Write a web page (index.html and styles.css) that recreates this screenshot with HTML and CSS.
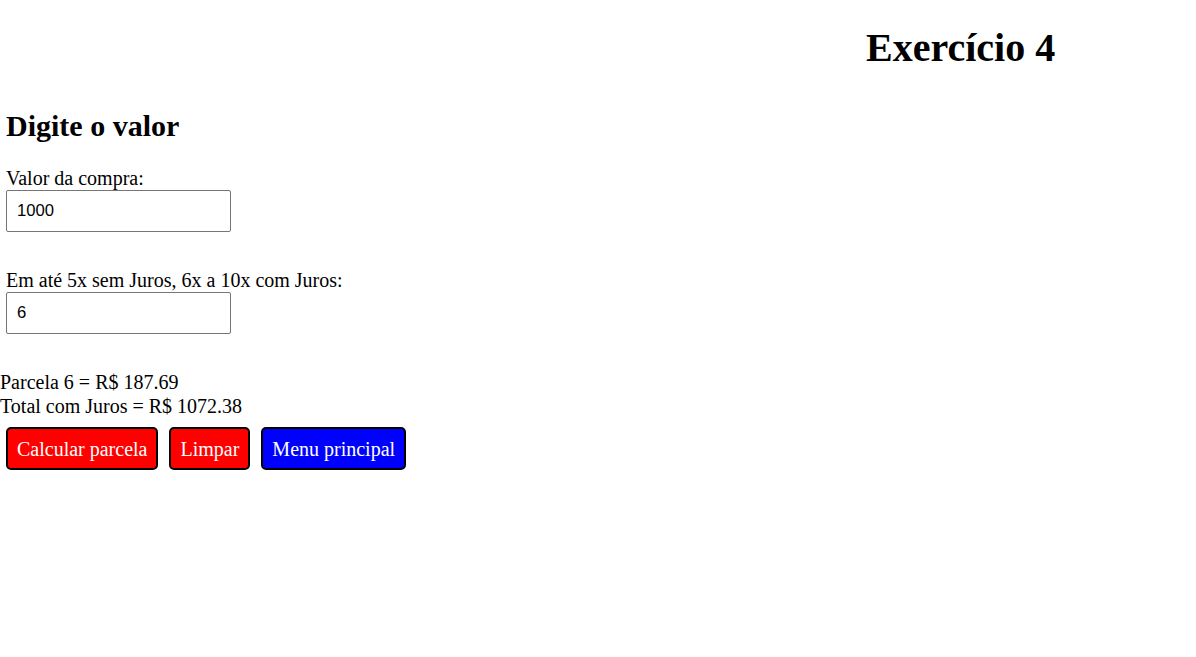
FILE: index.html
```html
<!DOCTYPE html>
<html lang="pt-BR">
<head>
<meta charset="utf-8">
<title>Exercício 4</title>
<link rel="stylesheet" href="styles.css">
</head>
<body>
<header class="topo">
  <h1 class="titulo">Exercício 4</h1>
</header>
<main class="conteudo">
  <h2 class="subtitulo">Digite o valor</h2>
  <form class="formulario">
    <label class="rotulo" for="valor">Valor da compra:</label>
    <input class="campo" id="valor" type="text" value="1000">
    <label class="rotulo rotulo-segundo" for="parcelas">Em até 5x sem Juros, 6x a 10x com Juros:</label>
    <input class="campo" id="parcelas" type="text" value="6">
  </form>
  <div class="resultado">
    <div class="linha">Parcela 6 = R$ 187.69</div>
    <div class="linha">Total com Juros = R$ 1072.38</div>
  </div>
  <div class="botoes">
    <button class="botao botao-vermelho" type="button">Calcular parcela</button>
    <button class="botao botao-vermelho" type="button">Limpar</button>
    <button class="botao botao-azul" type="button">Menu principal</button>
  </div>
</main>
</body>
</html>
```

FILE: styles.css
```css
html, body {
  margin: 0;
  padding: 0;
  background: #ffffff;
}

body {
  font-family: "Liberation Serif", "Times New Roman", serif;
  font-size: 20px;
  color: #000000;
}

.topo {
  display: flex;
  justify-content: flex-start;
  padding-left: 866px;
  padding-top: 25px;
}

.titulo {
  margin: 0;
  font-size: 40px;
  font-weight: bold;
  line-height: 46px;
}

.conteudo {
  display: flex;
  flex-direction: column;
  align-items: flex-start;
}

.subtitulo {
  margin: 38px 0 0 6px;
  font-size: 30px;
  font-weight: bold;
  line-height: 34px;
}

.formulario {
  display: flex;
  flex-direction: column;
  align-items: flex-start;
  padding-left: 6px;
  margin-top: 24px;
}

.rotulo {
  display: block;
  line-height: 23px;
}

.rotulo-segundo {
  margin-top: 37px;
}

.campo {
  box-sizing: border-box;
  width: 225px;
  height: 42px;
  margin: 0;
  padding: 0 10px;
  border: 1px solid #767676;
  border-radius: 2px;
  font-family: "Liberation Sans", Arial, sans-serif;
  font-size: 16.67px;
  color: #000000;
  background: #ffffff;
}

.resultado {
  margin-top: 36px;
}

.linha {
  line-height: 24px;
}

.botoes {
  display: flex;
  gap: 11px;
  padding-left: 6px;
  margin-top: 9px;
}

.botao {
  box-sizing: border-box;
  height: 43px;
  margin: 0;
  padding: 2px 9px 0;
  border: 2px solid #000000;
  border-radius: 5px;
  font-family: "Liberation Serif", "Times New Roman", serif;
  font-size: 20px;
  color: #ffffff;
  line-height: 23px;
}

.botao-vermelho {
  background: #ff0000;
}

.botao-azul {
  background: #0000ff;
}
```
